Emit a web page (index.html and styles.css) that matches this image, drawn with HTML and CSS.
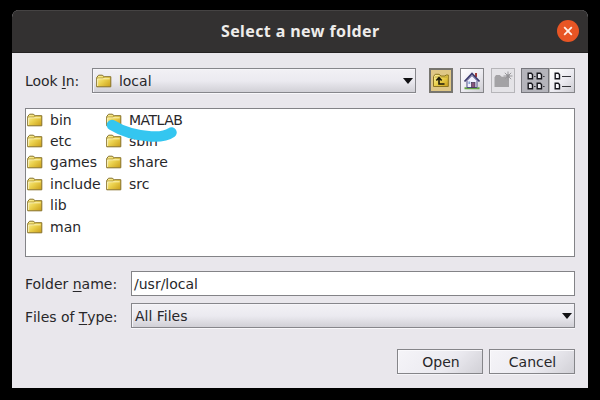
FILE: index.html
```html
<!DOCTYPE html>
<html lang="en">
<head>
<meta charset="utf-8">
<title>Select a new folder</title>
<link rel="stylesheet" href="styles.css">
</head>
<body>
<svg class="defs" width="0" height="0" aria-hidden="true">
  <defs>
    <linearGradient id="gold" x1="0" y1="0" x2="1" y2="1">
      <stop offset="0" stop-color="#fff6a8"/>
      <stop offset=".5" stop-color="#ead04c"/>
      <stop offset="1" stop-color="#c99d18"/>
    </linearGradient>
    <symbol id="folder" viewBox="0 0 16 14">
      <path d="M.7 12.800V3.5L2.6 1.200H6.2L8.200 2.700H14.800V12.800Z" fill="url(#gold)" stroke="#86712a" stroke-width="1"/>
      <path d="M1.6 12V4.8H13.6" fill="none" stroke="#fffad0" stroke-width=".8"/>
      <path d="M1 3.900H7L8.500 3" fill="none" stroke="#a68b2a" stroke-width=".7"/>
    </symbol>
  </defs>
</svg>
<main class="dialog">
  <header class="titlebar">
    <h1>Select a new folder</h1>
    <button class="close" aria-label="Close"><svg width="22" height="22" viewBox="0 0 22 22"><path d="M7.200 7.200L14.800 14.800M14.800 7.200L7.200 14.800" stroke="#fff0e8" stroke-width="1.800"/></svg></button>
  </header>
  <div class="content">
    <div class="toolbar">
      <span class="label">Look <u>I</u>n:</span>
      <div class="combo look">
        <svg class="folder" width="16" height="14"><use href="#folder"/></svg><span>local</span>
        <svg class="arrow" width="10" height="6" viewBox="0 0 10 6"><path d="M0 0H10L5 6Z"/></svg>
      </div>
      <div class="tools">
        <button class="tool up" aria-label="Up one level"><svg width="22" height="23" viewBox="0 0 22 23">
          <path d="M3.5 17.5V7.5L5.2 5.3H9L11 7H15L16 6H18.3V17.5Z" fill="url(#gold)" stroke="#8b7420"/>
          <path d="M4.5 8H17" stroke="#a68b2a" stroke-width=".7"/>
          <path d="M9 9.2V15H14.5M6.3 11.5L9 8.7L11.7 11.5" fill="none" stroke="#1c1a0a" stroke-width="1.6"/>
        </svg></button>
        <button class="tool" aria-label="Home"><svg width="22" height="23" viewBox="0 0 22 23">
          <path d="M3.5 19.2H18.5" stroke="#62a342" stroke-width="2"/>
          <path d="M15 4V8" stroke="#a03c38" stroke-width="2"/>
          <path d="M6 11.5L11 6.5L16 11.5V18.5H6Z" fill="#f2f2ff" stroke="#4c4c83"/>
          <path d="M3.5 12.5L11 4.500L18.5 12.5" fill="none" stroke="#3e3d70" stroke-width="1.8"/>
          <rect x="10.5" y="13.5" width="3.5" height="5" fill="#87557c" stroke="#403558" stroke-width=".7"/>
          <rect x="7.4" y="12.5" width="1.8" height="2.5" fill="#89a5d0"/>
        </svg></button>
        <button class="tool disabled" aria-label="New folder"><svg width="22" height="23" viewBox="0 0 22 23">
          <path d="M2.5 18V8.2L4 6H7.7L9.7 7.8H17V18Z" fill="#a3a2a5"/>
          <path d="M16 2.5V11.5M11.5 7H20.5M12.8 3.8L19.2 10.2M19.2 3.8L12.8 10.2" stroke="#99989c" stroke-width="1"/>
          <circle cx="16" cy="7" r="1.7" fill="#929195"/>
        </svg></button>
        <div class="views">
          <button class="tool view active" aria-label="List view"><svg width="25" height="23" viewBox="0 0 25 23">
            <g fill="#e6e6ec" stroke="#17171d" stroke-width="1.4"><path d="M6.2 4.2H9.2L10.5 5.5V9.8H6.2ZM15.2 4.2H18.2L19.5 5.5V9.8H15.2ZM6.2 14.2H9.2L10.5 15.5V19.8H6.2ZM15.2 14.2H18.2L19.5 15.5V19.8H15.2Z"/></g>
            <path d="M12.2 7.5H13.5M21.2 7.5H22.5M12.2 17.5H13.5M21.2 17.5H22.5" stroke="#222229" stroke-width="1.2"/>
          </svg></button>
          <button class="tool view details" aria-label="Details view"><svg width="24" height="23" viewBox="0 0 24 23">
            <g fill="#fafaff" stroke="#17171d" stroke-width="1.4"><path d="M6.2 4.2H9.2L10.5 5.5V9.8H6.2ZM6.2 14.2H9.2L10.5 15.5V19.8H6.2Z"/></g>
            <path d="M13 7.500H22M13 17.500H22" stroke="#35353a" stroke-width="1.2"/>
          </svg></button>
        </div>
      </div>
    </div>
    <div class="files">
      <ul>
        <li><svg class="folder" width="16" height="14"><use href="#folder"/></svg>bin</li>
        <li><svg class="folder" width="16" height="14"><use href="#folder"/></svg>etc</li>
        <li><svg class="folder" width="16" height="14"><use href="#folder"/></svg>games</li>
        <li><svg class="folder" width="16" height="14"><use href="#folder"/></svg>include</li>
        <li><svg class="folder" width="16" height="14"><use href="#folder"/></svg>lib</li>
        <li><svg class="folder" width="16" height="14"><use href="#folder"/></svg>man</li>
      </ul>
      <ul>
        <li><svg class="folder" width="16" height="14"><use href="#folder"/></svg><span class="matlab">MATLAB</span></li>
        <li><svg class="folder" width="16" height="14"><use href="#folder"/></svg>sbin</li>
        <li><svg class="folder" width="16" height="14"><use href="#folder"/></svg>share</li>
        <li><svg class="folder" width="16" height="14"><use href="#folder"/></svg>src</li>
      </ul>
      <svg class="stroke" width="76" height="30" viewBox="0 0 76 30"><path d="M9 6C21 13.500 33 16.500 48 17.500C57 18 63 17.500 68.500 13.500" fill="none" stroke="#34c6f0" stroke-width="10.500" stroke-linecap="round"/></svg>
    </div>
    <div class="form">
      <span class="label">Folder <u>n</u>ame:</span>
      <div class="input">/usr/local</div>
      <span class="label type">Files of <u>T</u>ype:</span>
      <div class="combo"><span>All Files</span><svg class="arrow" width="10" height="6" viewBox="0 0 10 6"><path d="M0 0H10L5 6Z"/></svg></div>
    </div>
    <div class="actions"><button class="action">Open</button><button class="action">Cancel</button></div>
  </div>
</main>
</body>
</html>
```

FILE: styles.css
```css
* { box-sizing: border-box; }
body { margin: 0; width: 600px; height: 400px; padding: 9.5px 12px 12px 11.500px; overflow: hidden; background: #000; color: #28272a; font: 14px/20px "DejaVu Sans", sans-serif; }
.defs { position: absolute; }
svg { display: block; flex: none; }
button { padding: 0; font: inherit; color: inherit; }
u { text-decoration-thickness: 1px; text-underline-offset: 2px; }
.dialog { height: 378.5px; background: #e9e7ec; border-radius: 7px 7px 0 0; overflow: hidden; }
.titlebar { height: 43.5px; display: grid; grid-template-columns: 1fr auto 1fr; align-items: center; background: #333131; border-top: 1px solid #454343; border-bottom: 1px solid #242222; }
h1 { grid-column: 2; margin: 0 0 0 1px; color: #eeecea; font: bold 16px/22px "Noto Sans", sans-serif; letter-spacing: .4px; }
.close { justify-self: end; margin-right: 9px; width: 22px; height: 22px; border: 0; border-radius: 50%; background: #e85524; }
.content { padding: 15px 13.500px 0; }
.toolbar { height: 25px; display: flex; align-items: center; }
.toolbar .label { width: 67px; letter-spacing: -.1px; }
.label { padding-top: 1px; white-space: nowrap; }
.type { font-kerning: none; padding-top: 2px; letter-spacing: -.05px; }
.combo { height: 25px; display: flex; align-items: center; padding: 0 2px 0 3px; border: 1px solid #86868b; box-shadow: 0 1px #f8f7fa, inset 1px 1px #f6f5f9; background: linear-gradient(#f2f1f5 0%, #ebeaf0 52%, #d1d0d6 100%); }
.look { width: 324px; }
.look span { margin-left: 7px; }
.arrow { margin-left: auto; fill: #111114; }
.tools { display: flex; gap: 7px; margin-left: 13px; }
.tool { width: 24px; height: 25px; border: 1px solid #858589; background: linear-gradient(135deg, #fff, #ebeaf0 55%, #cdccd2); }
.tool.up { border: 2px solid #77756f; background: #dfc786; }
.up svg { margin: -1px; }
.disabled { border-color: #b6b5b9; background: #e4e3e7; }
.views { display: flex; margin-left: -1px; }
.view { width: 27px; }
.view.active { width: 28px; border-color: #77777d; background: #b4b4bb; }
.details { width: 26px; border-left-color: #bbb; }
.details svg { margin-left: -1px; }
.files { position: relative; height: 149px; margin-top: 15px; padding: 0 1px; display: flex; align-items: flex-start; border: 1px solid #838387; background: #fff; }
ul { width: 79px; margin: 0; padding: 0; list-style: none; }
li { height: 21.400px; display: flex; align-items: center; gap: 7px; white-space: nowrap; }
.matlab { letter-spacing: -.5px; }
.stroke { position: absolute; left: 77px; top: 10px; }
.form { display: grid; grid-template-columns: 106px 1fr; grid-template-rows: 25px 25px; row-gap: 7px; align-items: center; margin-top: 14px; }
.input { height: 25px; padding: 1px 2px; border: 1px solid #838387; background: #fff; line-height: 22px; }
.actions { display: flex; justify-content: flex-end; gap: 6px; margin-top: 21px; }
.action { width: 86px; height: 25px; border: 1px solid #858589; background: linear-gradient(135deg, #f5f4f8, #ebeaf0 60%, #d1d0d6); box-shadow: inset 1px 1px #faf9fc, 0 1px #f5f4f8; }
.action:first-child { padding-left: 3px; }
.action:last-child { padding-left: 2px; }
```
